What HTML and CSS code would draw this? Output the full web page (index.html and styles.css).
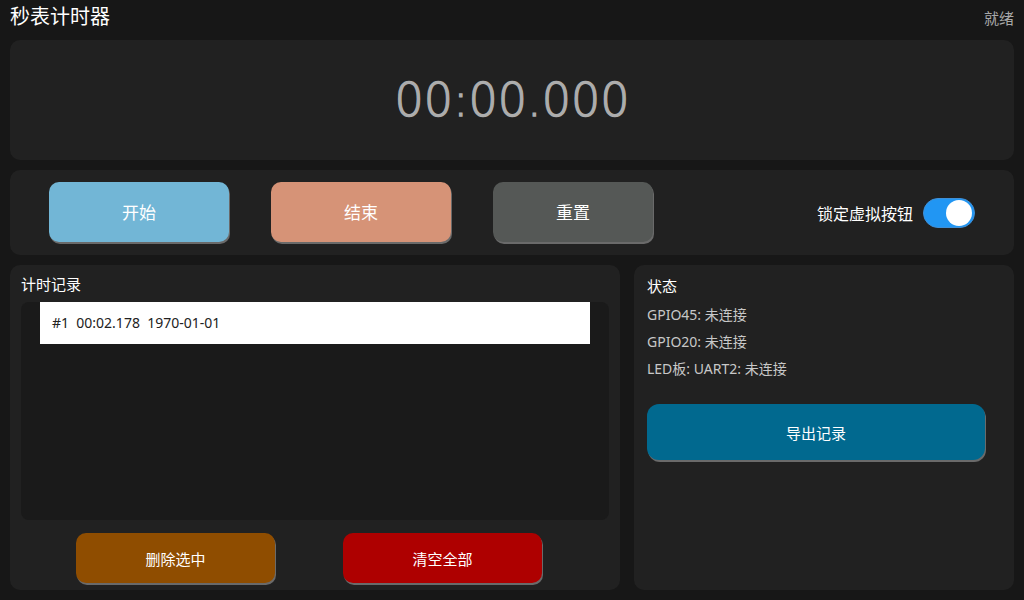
FILE: index.html
```html
<!DOCTYPE html>
<html lang="zh-CN">
<head>
  <meta charset="UTF-8" />
  <meta name="viewport" content="width=device-width, initial-scale=1.0"/>
  <title>秒表计时器</title>
  <link rel="stylesheet" href="styles.css">
</head>
<body>

  <!-- Title bar -->
  <header class="top-bar">
    <span class="app-title">秒表计时器</span>
    <span class="app-state">就绪</span>
  </header>

  <!-- Big time readout -->
  <section class="panel timer-panel">
    <div class="time-display">00:00.000</div>
  </section>

  <!-- Start / stop / reset and lock switch -->
  <section class="panel control-panel">
    <button class="btn btn-start">开始</button>
    <button class="btn btn-stop">结束</button>
    <button class="btn btn-reset">重置</button>
    <div class="lock-box">
      <span class="lock-label">锁定虚拟按钮</span>
      <span class="switch on"><span class="knob"></span></span>
    </div>
  </section>

  <div class="bottom-row">
    <!-- Lap records -->
    <section class="panel record-panel">
      <div class="panel-title">计时记录</div>
      <div class="record-list">
        <div class="record-item">#1&nbsp; 00:02.178&nbsp; 1970-01-01</div>
      </div>
      <div class="record-actions">
        <button class="btn btn-delete">删除选中</button>
        <button class="btn btn-clear">清空全部</button>
      </div>
    </section>

    <!-- Device status -->
    <section class="panel status-panel">
      <div class="panel-title">状态</div>
      <div class="status-line">GPIO45: 未连接</div>
      <div class="status-line">GPIO20: 未连接</div>
      <div class="status-line">LED板: UART2: 未连接</div>
      <button class="btn btn-export">导出记录</button>
    </section>
  </div>

</body>
</html>
```

FILE: styles.css
```css
body {
  margin: 0;
  width: 1024px;
  height: 600px;
  padding: 0 10px;
  box-sizing: border-box;
  background: #171717;
  color: #fff;
  font-family: "Noto Sans", "Noto Sans CJK SC", sans-serif;
  overflow: hidden;
  display: flex;
  flex-direction: column;
}

.top-bar {
  height: 40px;
  display: flex;
  justify-content: space-between;
  align-items: flex-start;
}

.app-title {
  font-size: 20px;
  line-height: 34px;
}

.app-state {
  font-size: 15px;
  line-height: 36px;
  color: #a8a8a8;
}

.panel {
  background: #212121;
  border-radius: 10px;
}

.timer-panel {
  height: 120px;
  display: flex;
  align-items: center;
  justify-content: center;
}

/* thin face thickened a little with a stroke */
.time-display {
  font-family: "DejaVu Sans", sans-serif;
  font-size: 46px;
  font-weight: 200;
  color: #adadad;
  -webkit-text-stroke: 1.3px #adadad;
}

.control-panel {
  margin-top: 10px;
  height: 85px;
  padding: 0 39px;
  box-sizing: border-box;
  display: flex;
  align-items: center;
  gap: 42px;
}

.btn {
  border: none;
  border-radius: 10px;
  color: #fff;
  font-family: inherit;
  cursor: pointer;
  box-shadow: 1px 2px 0 #6a6a6a;
}

.btn-start, .btn-stop, .btn-reset {
  width: 180px;
  height: 60px;
  font-size: 17px;
  margin-top: -2px;
}

.btn-start { background: #72b6d6; }
.btn-stop { background: #d69377; }
.btn-reset { background: #555856; width: 160px; }

.lock-box {
  margin-left: auto;
  display: flex;
  align-items: center;
  gap: 10px;
}

.lock-label {
  font-size: 16px;
}

.switch {
  width: 52px;
  height: 30px;
  border-radius: 15px;
  background: #8a8a8a;
  box-sizing: border-box;
  padding: 2px;
  display: flex;
}

.switch.on {
  background: #2196f3;
  border: 1px solid #3f8fd6;
  justify-content: flex-end;
}

.knob {
  width: 26px;
  height: 26px;
  margin-top: -1px;
  border-radius: 50%;
  background: #fff;
}

.bottom-row {
  margin-top: 10px;
  height: 325px;
  display: flex;
  gap: 14px;
}

.panel-title {
  font-size: 15px;
  line-height: 20px;
}

.record-panel {
  width: 610px;
  padding: 9px 11px 0;
  box-sizing: border-box;
}

.record-list {
  margin-top: 8px;
  height: 218px;
  background: #1a1a1a;
  border-radius: 8px;
  padding: 0 19px;
}

.record-item {
  height: 42px;
  background: #fff;
  color: #222;
  font-size: 14px;
  line-height: 42px;
  padding-left: 12px;
}

.record-actions {
  margin-top: 13px;
  padding-left: 55px;
  display: flex;
  gap: 68px;
}

.btn-delete, .btn-clear {
  width: 199px;
  height: 50px;
  font-size: 15px;
}

.btn-delete { background: #8f4d00; }
.btn-clear { background: #ae0000; }

.status-panel {
  flex: 1;
  padding: 11px 13px 0;
  box-sizing: border-box;
}

.status-line {
  font-size: 14px;
  line-height: 27px;
  color: #c8c8c8;
}

.panel-title + .status-line {
  margin-top: 5px;
}

.btn-export {
  margin-top: 22px;
  width: 338px;
  height: 56px;
  border-radius: 12px;
  font-size: 15px;
  background: #01698f;
}
```
